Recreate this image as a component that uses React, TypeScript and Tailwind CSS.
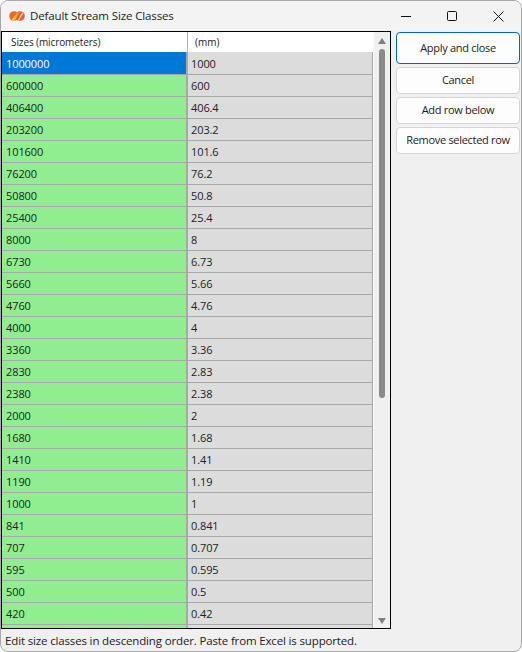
const rows: [string, string][] = [
  ["1000000", "1000"], ["600000", "600"], ["406400", "406.4"], ["203200", "203.2"], ["101600", "101.6"],
  ["76200", "76.2"], ["50800", "50.8"], ["25400", "25.4"], ["8000", "8"], ["6730", "6.73"],
  ["5660", "5.66"], ["4760", "4.76"], ["4000", "4"], ["3360", "3.36"], ["2830", "2.83"],
  ["2380", "2.38"], ["2000", "2"], ["1680", "1.68"], ["1410", "1.41"], ["1190", "1.19"],
  ["1000", "1"], ["841", "0.841"], ["707", "0.707"], ["595", "0.595"], ["500", "0.5"], ["420", "0.42"], ["", ""],
];

const font = { fontFamily: '"Open Sans", "Noto Sans", sans-serif' };

function Btn({ label, primary }: { label: string; primary?: boolean }) {
  return (
    <button
      className={
        "w-[124px] rounded-[4px] bg-[#fdfdfd] text-[11px] text-[#1b1b1b] tracking-[-0.3px] " +
        (primary ? "h-[32px] border-[1.5px] border-[#0067c0]" : "h-[27px] border border-[#d4d4d4]")
      }
    >
      {label}
    </button>
  );
}

export default function App() {
  return (
    <div className="w-[522px] h-[652px] bg-white overflow-hidden" style={font}>
      <div className="w-[522px] h-[652px] bg-[#f0f0f0] rounded-[8px] border border-[#a8a8a8] flex flex-col overflow-hidden">
        <div className="h-[30px] shrink-0 flex items-center pl-[8px] bg-[#f3f3f3]">
          <svg width="16" height="10" viewBox="0 0 16 10" className="shrink-0">
            <defs>
              <linearGradient id="lg" x1="0" y1="1" x2="1" y2="0">
                <stop offset="0.25" stopColor="#fdd02f" />
                <stop offset="0.85" stopColor="#f58a20" />
              </linearGradient>
            </defs>
            <circle cx="5" cy="5" r="4.8" fill="#f2602b" />
            <circle cx="11" cy="5" r="4.8" fill="#ee5a2b" />
            <path d="M2.6 9.2 L8.2 1 L10.6 1.6 L5.4 9.8 Z" fill="url(#lg)" />
            <path d="M8 10 L13.4 1.2 L14.6 2 L9.6 10 Z" fill="#fbc9a8" />
          </svg>
          <span className="ml-[5px] text-[11.5px] text-[#222] tracking-[-0.13px]">Default Stream Size Classes</span>
          <div className="ml-auto flex items-center h-full text-[#111]">
            <div className="w-[46px] flex justify-center">
              <svg width="10" height="10" viewBox="0 0 10 10"><path d="M0 5.5H10" stroke="#111" strokeWidth="1" /></svg>
            </div>
            <div className="w-[46px] flex justify-center">
              <svg width="10" height="10" viewBox="0 0 10 10"><rect x="0.5" y="0.5" width="9" height="9" rx="1" fill="none" stroke="#111" strokeWidth="1" /></svg>
            </div>
            <div className="w-[46px] flex justify-center">
              <svg width="11" height="11" viewBox="0 0 11 11"><path d="M0.5 0.5L10.5 10.5M10.5 0.5L0.5 10.5" stroke="#111" strokeWidth="1" /></svg>
            </div>
          </div>
        </div>
        <div className="flex flex-1 min-h-0">
          <div className="w-[390px] h-[598px] shrink-0 border border-black flex bg-[#f0f0f0] overflow-hidden">
            <div className="w-[371px] shrink-0 overflow-hidden">
              <div className="flex h-[20px] bg-white text-[10px] text-[#222]">
                <div className="w-[186px] shrink-0 pl-[9px] pt-[1px] flex items-center border-r border-[#b4b4b4] tracking-[-0.1px]">Sizes (micrometers)</div>
                <div className="flex-1 pl-[7px] pt-[1px] flex items-center">(mm)</div>
              </div>
              {rows.map(([a, b], i) => (
                <div key={i} className="flex h-[22px] text-[11px] tracking-[-0.1px]">
                  <div
                    className={
                      "w-[186px] shrink-0 pl-[4px] flex items-center border-r-[2px] border-[#a8a8a8] " +
                      (i === 0
                        ? "pt-[2px] bg-[#0078d7] text-white"
                        : "pt-[1px] border-t bg-[#90ee90] text-[#222]")
                    }
                  >
                    {a}
                  </div>
                  <div
                    className={
                      "flex-1 pl-[3px] flex items-center bg-[#dcdcdc] text-[#222] border-r border-[#a8a8a8] " +
                      (i === 0 ? "pt-[2px]" : "pt-[1px] border-t")
                    }
                  >
                    {b}
                  </div>
                </div>
              ))}
            </div>
            <div className="w-[17px] shrink-0 flex flex-col items-center pt-[6px] relative border-l border-[#fafafa]">
              <svg width="8" height="6" viewBox="0 0 8 6"><path d="M4 0L8 6H0Z" fill="#808080" /></svg>
              <div className="w-[6px] h-[349px] mt-[5px] bg-[#8a8a8a] rounded-[3px]" />
              <svg width="8" height="6" viewBox="0 0 8 6" className="absolute bottom-[4px]"><path d="M4 6L8 0H0Z" fill="#808080" /></svg>
            </div>
          </div>
          <div className="flex flex-col gap-[3px] ml-[5px] mt-[1px]">
            <Btn label="Apply and close" primary />
            <Btn label="Cancel" />
            <Btn label="Add row below" />
            <Btn label="Remove selected row" />
          </div>
        </div>
        <div className="h-[22px] shrink-0 pl-[4px] pt-[1px] text-[11.5px] text-[#222] flex items-center tracking-[-0.15px]">
          Edit size classes in descending order. Paste from Excel is supported.
        </div>
      </div>
    </div>
  );
}
